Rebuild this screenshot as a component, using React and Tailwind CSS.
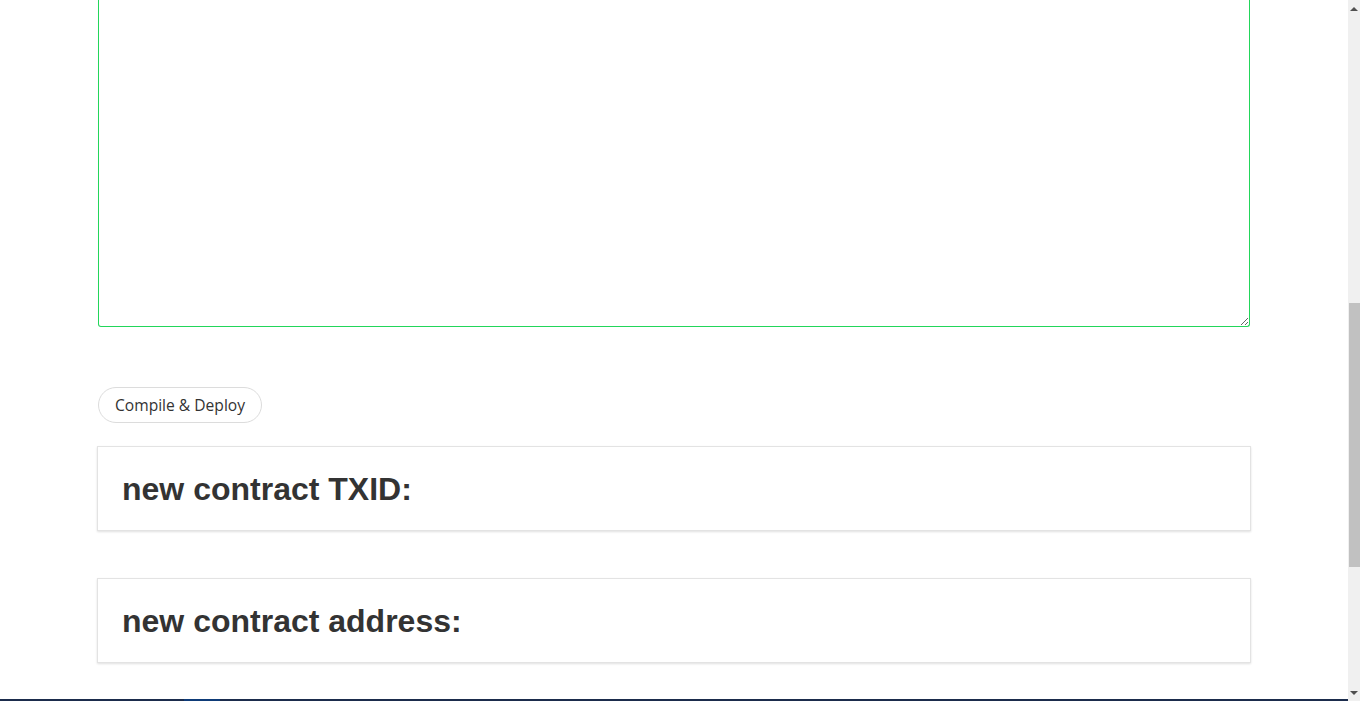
import React from "react";

const ResultCard = ({ label }) => (
  <div className="border border-[#e3e3e3] bg-white shadow-[0_1px_2px_rgba(0,0,0,0.12)] px-6 h-[85px] flex items-center">
    <h2 className="text-[32px] font-bold text-[#333] leading-none pt-[1px]">{label}</h2>
  </div>
);

const App = () => {
  return (
    <div className="h-[701px] flex bg-white overflow-hidden" style={{ fontFamily: '"Liberation Sans", Arial, sans-serif' }}>
      <div className="flex-1 flex flex-col">
        <div className="flex-1 w-[1154px] mx-auto flex flex-col">
          <textarea
            className="block w-[1152px] mx-auto h-[327px] border border-t-0 border-[#22d65a] rounded-b-[3px] outline-none resize-y"
            defaultValue=""
          />
          <div className="mt-[60px] pl-px">
            <button
              className="h-9 pl-[16px] pr-[16px] pt-[2px] rounded-full border border-[#dcdcdc] bg-white text-[15.6px] text-[#333]"
              style={{ fontFamily: '"Open Sans", "Noto Sans", sans-serif' }}
            >
              Compile &amp; Deploy
            </button>
          </div>
          <div className="mt-[23px]">
            <ResultCard label="new contract TXID:" />
          </div>
          <div className="mt-[47px]">
            <ResultCard label="new contract address:" />
          </div>
        </div>
        <div className="h-[2px] bg-[#1b2c4c] flex">
          <div className="ml-[184px] w-9 bg-[#0e3b78]" />
        </div>
      </div>
      <div className="w-3 bg-[#f0f0f0] flex flex-col items-end">
        <div className="w-full h-[17px] flex items-center justify-center">
          <div className="w-0 h-0 border-x-[4px] border-x-transparent border-b-[4px] border-b-[#505050]" />
        </div>
        <div className="h-[286px]" />
        <div className="w-[11px] h-[264px] bg-[#c1c1c1]" />
        <div className="flex-1" />
        <div className="w-full h-[17px] flex items-center justify-center">
          <div className="w-0 h-0 border-x-[4px] border-x-transparent border-t-[4px] border-t-[#505050]" />
        </div>
      </div>
    </div>
  );
};

export default App;
